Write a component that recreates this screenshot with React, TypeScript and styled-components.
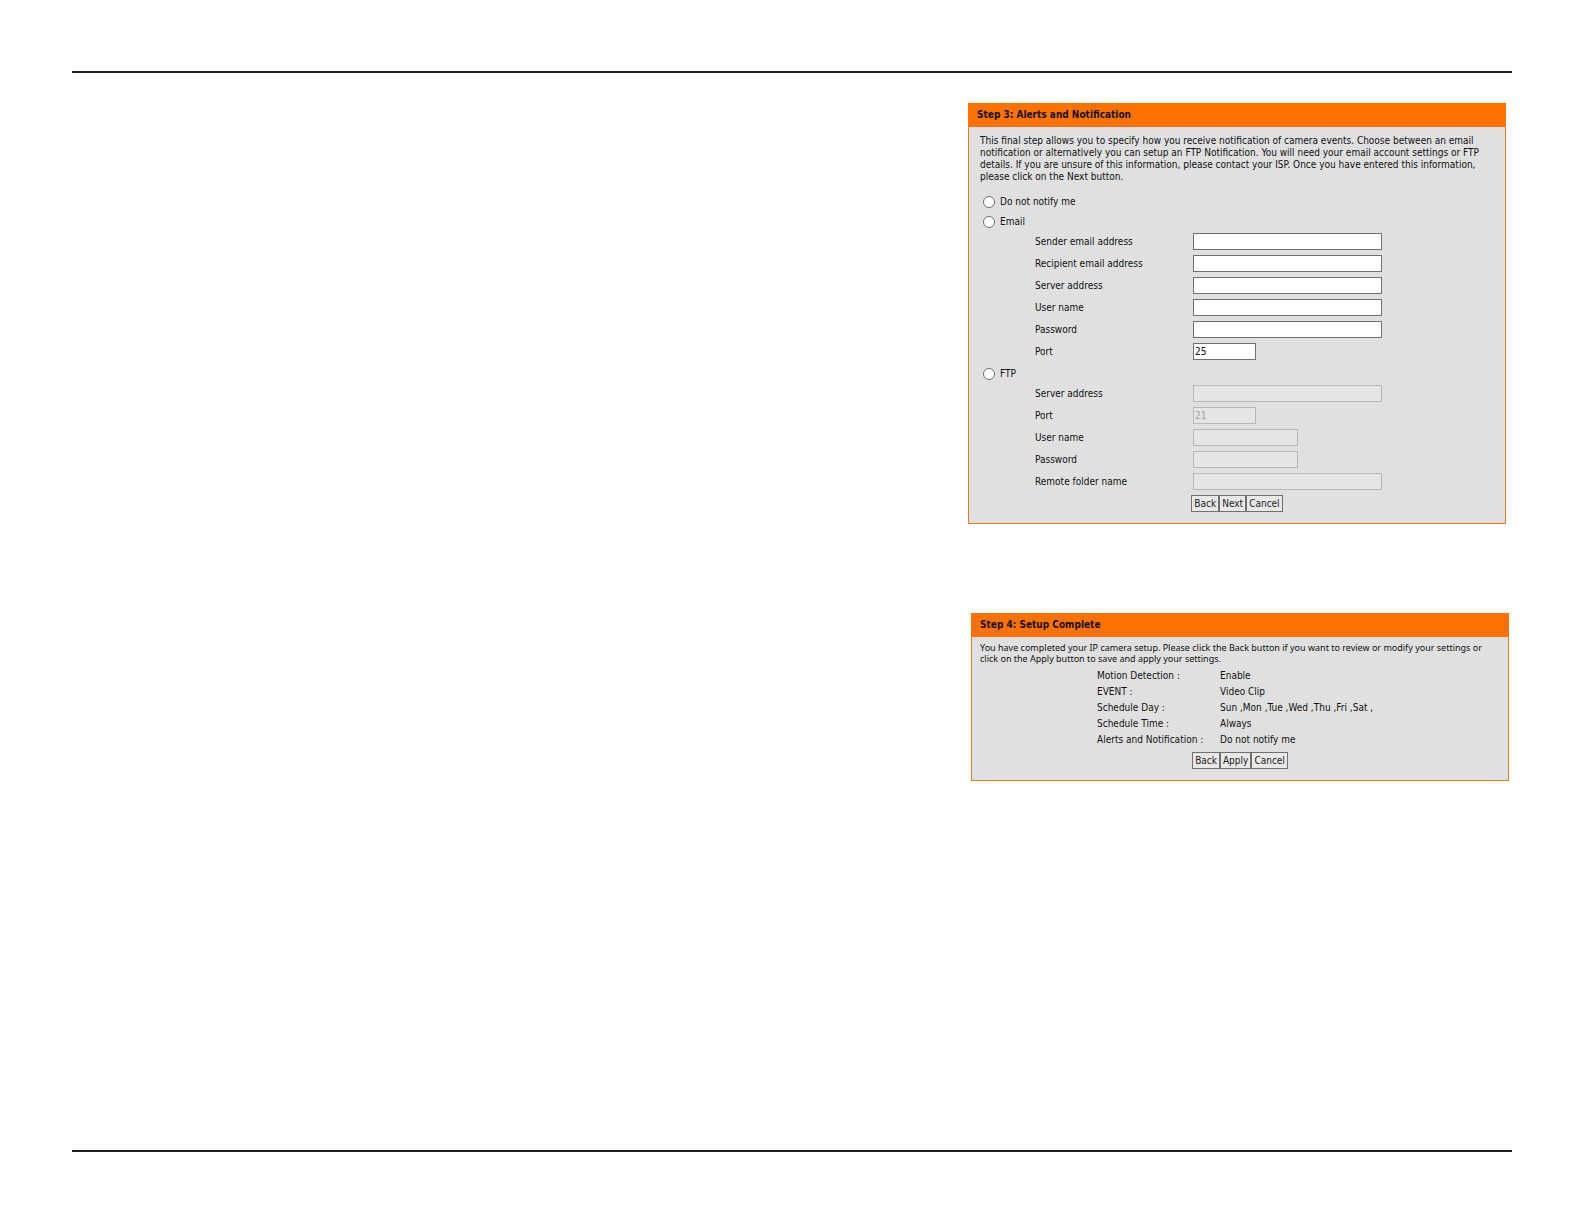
import React, { useId, useState } from 'react';
import styled, { createGlobalStyle } from 'styled-components';

const GlobalStyle = createGlobalStyle`
  * { box-sizing: border-box; }
  body {
    margin: 0;
    background: #fff;
    color: #111;
    font-family: 'DejaVu Sans Condensed', Tahoma, 'DejaVu Sans', sans-serif;
    font-size: 10px;
    line-height: 12px;
  }
`;

const Page = styled.main`
  display: flex;
  min-height: 100vh;
  padding: 71px 72px 72px;
`;

const Sheet = styled.div`
  flex: 1;
  display: flex;
  flex-direction: column;
  align-items: flex-end;
  gap: 89px;
  padding: 30px 3px 30px 0;
  border-top: 2px solid #231f20;
  border-bottom: 2px solid #231f20;
`;

const Panel = styled.section<{ $inset?: number }>`
  width: 100%;
  max-width: 538px;
  margin-right: ${(p) => p.$inset ?? 0}px;
  background: #e0e0e0;
  border: 1px solid #e07c1c;
`;

const PanelTitle = styled.h2`
  margin: -1px -1px 0;
  padding: 0 9px;
  background: #ff7200;
  font-size: 10px;
  font-weight: bold;
  line-height: 24px;
`;

const Intro = styled.p`
  margin: 0;
  padding: 8px 11px 0;
`;

const SmallIntro = styled(Intro)`
  padding: 5px 16px 0 8px;
  font-family: 'Noto Sans', sans-serif;
  font-size: 9px;
  line-height: 11px;
`;

const Form = styled.form`
  padding: 9px 0 11px;
`;

const Choice = styled.label`
  display: flex;
  align-items: center;
  gap: 5px;
  height: 20px;
  padding-left: 14px;
`;

const Radio = styled.input.attrs({ type: 'radio' })`
  appearance: none;
  width: 12px;
  height: 12px;
  margin: 0;
  border: 1px solid #707070;
  border-radius: 50%;
  background: #fff;

  &:checked {
    background: radial-gradient(#222 0 3px, #fff 4px);
  }
`;

const Fields = styled.div`
  display: grid;
  gap: 5px;
  padding: 1px 0 4px 66px;
`;

const FieldRow = styled.div`
  display: grid;
  grid-template-columns: 158px 1fr;
  align-items: center;
`;

const widths = { long: 189, medium: 105, short: 63 };

const TextBox = styled.input<{ $size: keyof typeof widths }>`
  width: ${(p) => widths[p.$size]}px;
  height: 17px;
  padding: 0 1px;
  border: 1px solid #707070;
  background: #fff;
  color: #111;
  font-family: inherit;
  font-size: 10px;

  &:disabled {
    border-color: #b8b8b8;
    background: #e5e5e5;
    color: #a0a0a0;
  }
`;

const Buttons = styled.div`
  display: flex;
  justify-content: center;
  padding-top: 1px;
`;

const Button = styled.button`
  height: 17px;
  padding: 0 2px;
  border: 1px solid #707070;
  background: #e8e8e8;
  color: #222;
  font-family: inherit;
  font-size: 10px;
  line-height: 15px;
`;

const Summary = styled.table`
  margin: 4px 0 3px 125px;
  border-collapse: collapse;
  line-height: 16px;
`;

const Name = styled.th`
  width: 123px;
  padding: 0;
  font-weight: normal;
  text-align: left;
`;

const Value = styled.td`
  padding: 0;
`;

const Complete = styled.div`
  padding-bottom: 11px;
`;

type FieldProps = {
  label: string;
  size?: keyof typeof widths;
  type?: string;
  value?: string;
  disabled?: boolean;
};

function Field({ label, size = 'long', type = 'text', value = '', disabled }: FieldProps) {
  const id = useId();
  return (
    <FieldRow>
      <label htmlFor={id}>{label}</label>
      <TextBox id={id} type={type} $size={size} defaultValue={value} disabled={disabled} />
    </FieldRow>
  );
}

const summary = [
  ['Motion Detection :', 'Enable'],
  ['EVENT :', 'Video Clip'],
  ['Schedule Day :', 'Sun ,Mon ,Tue ,Wed ,Thu ,Fri ,Sat ,'],
  ['Schedule Time :', 'Always'],
  ['Alerts and Notification :', 'Do not notify me'],
];

export default function App() {
  const [method, setMethod] = useState('');
  const choice = (name: string) => (
    <Radio name="notify" checked={method === name} onChange={() => setMethod(name)} />
  );
  const ftpOff = method !== 'ftp';

  return (
    <Page>
      <GlobalStyle />
      <Sheet>
        <Panel $inset={3}>
          <PanelTitle>Step 3: Alerts and Notification</PanelTitle>
          <Intro>
            This final step allows you to specify how you receive notification of camera events.
            Choose between an email notification or alternatively you can setup an FTP Notification.
            You will need your email account settings or FTP details. If you are unsure of this
            information, please contact your ISP. Once you have entered this information, please
            click on the Next button.
          </Intro>
          <Form>
            <Choice>{choice('none')}Do not notify me</Choice>
            <Choice>{choice('email')}Email</Choice>
            <Fields>
              <Field label="Sender email address" />
              <Field label="Recipient email address" />
              <Field label="Server address" />
              <Field label="User name" />
              <Field label="Password" type="password" />
              <Field label="Port" size="short" value="25" />
            </Fields>
            <Choice>{choice('ftp')}FTP</Choice>
            <Fields>
              <Field label="Server address" disabled={ftpOff} />
              <Field label="Port" size="short" value="21" disabled={ftpOff} />
              <Field label="User name" size="medium" disabled={ftpOff} />
              <Field label="Password" size="medium" type="password" disabled={ftpOff} />
              <Field label="Remote folder name" disabled={ftpOff} />
            </Fields>
            <Buttons>
              <Button type="button">Back</Button>
              <Button type="button">Next</Button>
              <Button type="button">Cancel</Button>
            </Buttons>
          </Form>
        </Panel>
        <Panel>
          <PanelTitle>Step 4: Setup Complete</PanelTitle>
          <SmallIntro>
            You have completed your IP camera setup. Please click the Back button if you want to
            review or modify your settings or click on the Apply button to save and apply your
            settings.
          </SmallIntro>
          <Complete>
            <Summary>
              <tbody>
                {summary.map(([name, value]) => (
                  <tr key={name}>
                    <Name scope="row">{name}</Name>
                    <Value>{value}</Value>
                  </tr>
                ))}
              </tbody>
            </Summary>
            <Buttons>
              <Button type="button">Back</Button>
              <Button type="button">Apply</Button>
              <Button type="button">Cancel</Button>
            </Buttons>
          </Complete>
        </Panel>
      </Sheet>
    </Page>
  );
}
